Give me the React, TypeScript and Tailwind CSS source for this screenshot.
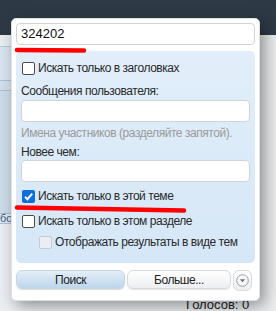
import { ReactNode } from "react";

const font = { fontFamily: '"Liberation Sans", Arial, sans-serif' };

function Box({ checked, disabled }: { checked?: boolean; disabled?: boolean }) {
  if (checked) {
    return (
      <span className="flex h-[13px] w-[13px] shrink-0 items-center justify-center rounded-[2px] bg-[#0b6fe0]">
        <svg width="11" height="11" viewBox="0 0 11 11">
          <path d="M2 5.8 L4.4 8.2 L9.2 2.6" fill="none" stroke="#fff" strokeWidth="2" />
        </svg>
      </span>
    );
  }
  return (
    <span
      className={`h-[13px] w-[13px] shrink-0 rounded-[2px] border ${
        disabled ? "border-[#c4ccd4] bg-[#e8eef4]" : "border-[#4a4a4a] bg-white"
      }`}
    />
  );
}

function Check({
  children,
  checked,
  disabled,
  className,
}: {
  children: ReactNode;
  checked?: boolean;
  disabled?: boolean;
  className?: string;
}) {
  return (
    <div className={`flex h-[18px] items-center gap-[3px] whitespace-nowrap ${className ?? ""}`}>
      <Box checked={checked} disabled={disabled} />
      <span className="text-[12px] leading-none text-[#2a2a2a]">{children}</span>
    </div>
  );
}

function Field() {
  return <div className="h-[22px] rounded-[4px] border border-[#cfd4d8] bg-white" />;
}

export default function App() {
  return (
    <div className="relative h-[311px] w-[276px] overflow-hidden bg-[#eceef0]" style={font}>
      {/* page behind the popup */}
      <div className="h-[35px] bg-[#2d3a46]" />
      <div className="flex">
        <div className="w-[40px]">
          <div className="h-[12px] border-b border-[#b7cadb] bg-[#e7ecf1]" />
          <div className="h-[34px] border-b border-[#a9c0d6] bg-[#d7e3ee]" />
          <div className="h-[10px] border-b border-[#a9c0d6] bg-[#d2dfeb]" />
          <div className="h-[122px] bg-[#cddbe8]" />
          <div className="flex h-[11px] items-center border-y border-[#a9c0d6] bg-[#dfe8f0] text-[11px] text-[#3a5f88]">
            бор
          </div>
          <div className="h-[80px] bg-[#e9edf1]" />
        </div>
        <div className="flex-1" />
      </div>
      <div className="absolute left-[186px] top-[299px] text-[13px] leading-[12px] text-[#222]">Голосов: 0</div>

      {/* search popup */}
      <div className="absolute left-[11px] top-[18px] flex h-[283px] w-[249px] flex-col rounded-[5px] border border-[#dde1e5] bg-white px-[4px] pt-[4px] tracking-[-0.45px] shadow-[5px_5px_16px_rgba(0,0,0,0.4)]">
        <div className="flex h-[22px] items-center rounded-[4px] border border-[#cfd4d8] bg-white pl-[4px] text-[13px] tracking-normal text-[#111]">
          324202
        </div>

        <div className="mt-[6px] flex flex-col rounded-[5px] bg-gradient-to-b from-[#e2eefa] to-[#d5e7f7] pl-[5px] pr-[5px] pt-[8px] pb-[12px]">
          <Check className="pl-[1px]">Искать только в заголовках</Check>
          <div className="mt-[5px] flex h-[18px] items-center text-[12px] text-[#2a2a2a]">Сообщения пользователя:</div>
          <Field />
          <div className="mt-[3px] flex h-[16px] items-center text-[12px] text-[#9a9a9a]">
            Имена участников (разделяйте запятой).
          </div>
          <div className="mt-[3px] flex h-[16px] items-center text-[12px] text-[#2a2a2a]">Новее чем:</div>
          <Field />
          <Check checked className="mt-[5px] pl-[1px]">
            Искать только в этой теме
          </Check>
          <Check className="mt-[7px] pl-[1px]">Искать только в этом разделе</Check>
          <Check disabled className="mt-[3px] pl-[18px]">
            Отображать результаты в виде тем
          </Check>
        </div>

        <div className="mt-[7px] flex h-[20px] gap-[2px]">
          <button className="flex h-[19px] w-[109px] items-center justify-center rounded-[6px] border border-[#c9d6e2] bg-gradient-to-b from-[#e4eff9] to-[#bdd6eb] text-[12px] text-[#222] shadow-[0_1px_1px_rgba(0,0,0,0.15)]">
            Поиск
          </button>
          <button className="flex h-[19px] w-[104px] items-center justify-center rounded-[6px] border border-[#d8dadd] bg-gradient-to-b from-[#ffffff] to-[#eceef1] text-[12px] text-[#222] shadow-[0_1px_1px_rgba(0,0,0,0.12)]">
            Больше...
          </button>
          <button className="flex h-[21px] w-[19px] items-center justify-center rounded-[6px] border border-[#d8dadd] bg-gradient-to-b from-[#ffffff] to-[#eceef1]">
            <svg width="13" height="13" viewBox="0 0 13 13">
              <circle cx="6.5" cy="6.5" r="5.8" fill="#f7f7f7" stroke="#9a9ea4" strokeWidth="1" />
              <path d="M3.8 5.2 L9.2 5.2 L6.5 8.2 Z" fill="#6d7278" />
            </svg>
          </button>
        </div>
      </div>

      {/* red marker annotations */}
      <svg className="absolute left-0 top-0" width="276" height="311" viewBox="0 0 276 311">
        <path d="M17 50 L84 50.5" stroke="#ff0000" strokeWidth="4.5" strokeLinecap="round" fill="none" />
        <path d="M17 207.5 Q90 209 184 210.5" stroke="#ff0000" strokeWidth="4.5" strokeLinecap="round" fill="none" />
      </svg>
    </div>
  );
}
